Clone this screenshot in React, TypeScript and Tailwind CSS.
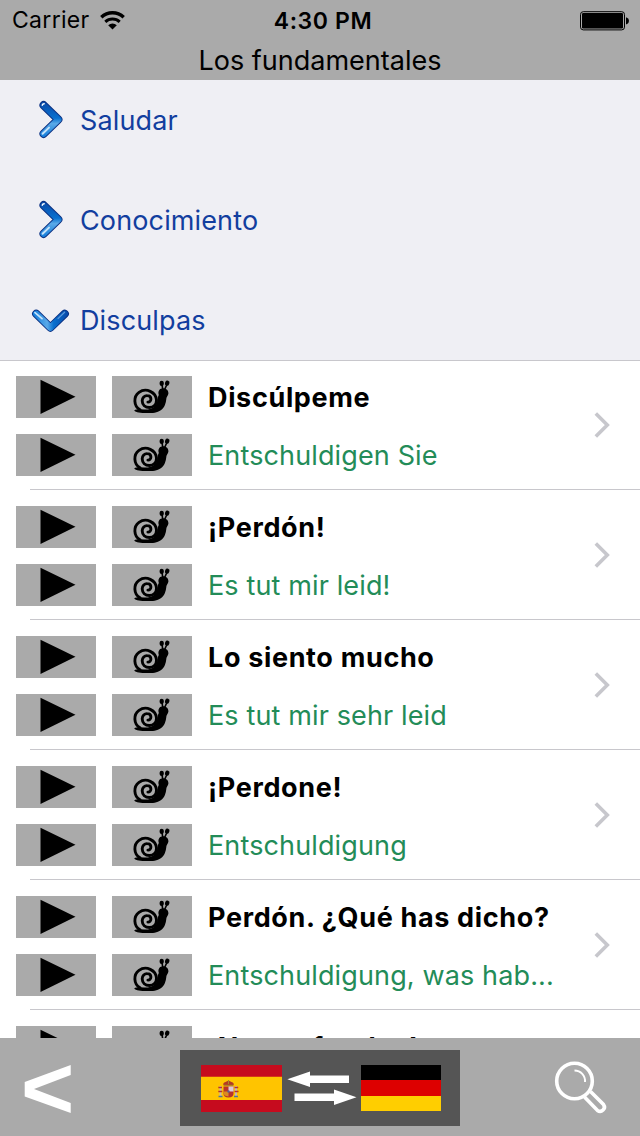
import type { ReactNode } from "react";

const topics = [
  { title: "Saludar", open: false },
  { title: "Conocimiento", open: false },
  { title: "Disculpas", open: true },
];

const phrases = [
  { source: "Discúlpeme", target: "Entschuldigen Sie" },
  { source: "¡Perdón!", target: "Es tut mir leid!" },
  { source: "Lo siento mucho", target: "Es tut mir sehr leid" },
  { source: "¡Perdone!", target: "Entschuldigung" },
  { source: "Perdón. ¿Qué has dicho?", target: "Entschuldigung, was hab..." },
  { source: "¡No me fundas!", target: "" },
];

function WifiIcon() {
  return (
    <svg width="26" height="20" viewBox="0 0 26 20" fill="none" stroke="#000">
      <path d="M1.3 6.2a16.4 16.4 0 0 1 22.4 0" strokeWidth="3.4" />
      <path d="M5.3 10.9a10.6 10.6 0 0 1 14.4 0" strokeWidth="3" />
      <path d="M12.5 18.6 8.2 14.2a6.2 6.2 0 0 1 8.6 0Z" fill="#000" stroke="none" />
    </svg>
  );
}

function BatteryIcon() {
  return (
    <svg width="50" height="20" viewBox="0 0 50 20">
      <rect x="0.5" y="0.7" width="44" height="18.2" rx="2.8" fill="none" stroke="#000" />
      <rect x="2" y="2" width="41" height="15.6" rx="1.3" />
      <path d="M46 6.4h.7q2.3.8 2.3 3.4t-2.3 3.4H46Z" />
    </svg>
  );
}

function GlossyChevron({ open }: { open: boolean }) {
  return (
    <svg width="40" height="40" viewBox="0 0 40 40" fill="none" strokeLinecap="round" strokeLinejoin="round">
      <defs>
        <linearGradient id="gloss-side" gradientUnits="userSpaceOnUse" x1="0" y1="2" x2="0" y2="38">
          <stop offset="0" stopColor="#0a4aa8" />
          <stop offset="0.45" stopColor="#0870cf" />
          <stop offset="0.6" stopColor="#5aa9e8" />
          <stop offset="1" stopColor="#0b78d8" />
        </linearGradient>
        <linearGradient id="gloss-down" gradientUnits="userSpaceOnUse" x1="2" y1="0" x2="38" y2="0">
          <stop offset="0" stopColor="#0b78d8" />
          <stop offset="0.42" stopColor="#5aa9e8" />
          <stop offset="0.6" stopColor="#0870cf" />
          <stop offset="1" stopColor="#0a4aa8" />
        </linearGradient>
      </defs>
      {open ? (
        <>
          <path d="M6.2 13.8 20.4 27.6 34.8 13.8" stroke="#0b2f80" strokeWidth="8.2" />
          <path d="M6.2 13.8 20.4 27.6 34.8 13.8" stroke="url(#gloss-down)" strokeWidth="6.4" />
          <path d="M5 12.6 12 18.6" stroke="#c4e2fa" strokeWidth="1.8" />
          <path d="M28 18.6 34.6 12.2" stroke="#5f9bdc" strokeWidth="1.2" />
        </>
      ) : (
        <>
          <path d="M13.6 5.2 28.3 19.5 13.6 33.8" stroke="#0b2f80" strokeWidth="8.2" />
          <path d="M13.6 5.2 28.3 19.5 13.6 33.8" stroke="url(#gloss-side)" strokeWidth="6.4" />
          <path d="M12.2 5.2q.4-1.4 2-1.4" stroke="#fff" strokeWidth="1.4" />
          <path d="M12.6 33.8 19 27.6" stroke="#c4e2fa" strokeWidth="2" />
        </>
      )}
    </svg>
  );
}

function SnailIcon() {
  return (
    <svg width="40" height="36" viewBox="0 0 40 36" fill="none" stroke="#000" strokeLinecap="round">
      <path
        d="M2.2 31.6C3 30.200 6 30.200 8 30.200L12 30.500C19 31 23.500 28.500 24.800 24c1-3.500.8-6 2-8-1.200-3.800.8-6.700 4.400-6.700 3.200 0 5.400 2.300 5.200 5.200-.2 1.900-1.700 3-2 4.700-.5 5-1.800 9.500-5.600 12-3.500 2.600-8 2.900-14 2.900-6 0-11-.3-12.600-2.500Z"
        fill="#000"
        stroke="none"
      />
      <path
        d="M8 30.800C1.500 27 1.200 17.500 7 13.300c7-5 17.200-.3 17.500 8 .1 4.200-3 7.200-7 7.200-4.300 0-7.300-2.900-7.300-6.700 0-3.200 2.300-5.300 5-5.200 2.200 0 3.700 1.500 3.700 3.500 0 1.800-1.300 3.100-3 3"
        strokeWidth="2.9"
      />
      <path d="M30.700 9.800 29.900 5M33 9.800 35.100 5" strokeWidth="1.6" />
      <path d="M29.700 3.800v1.200M35.400 3.600l-.4 1" strokeWidth="4.200" />
    </svg>
  );
}

function SoundButton({ children, label }: { children: ReactNode; label: string }) {
  return (
    <button type="button" aria-label={label} className="flex h-[42px] w-20 items-center justify-center bg-[#aaaaaa]">
      {children}
    </button>
  );
}

function PlayRow() {
  return (
    <>
      <SoundButton label="Play">
        <svg width="36" height="36" viewBox="0 0 36 36" className="ml-1">
          <path d="M.5.7 35.500 17.800.500 35Z" />
        </svg>
      </SoundButton>
      <SoundButton label="Play slowly">
        <SnailIcon />
      </SoundButton>
    </>
  );
}

function PhraseRow({ source, target }: { source: string; target: string }) {
  return (
    <li className="flex h-[130px] shrink-0 flex-col">
      <div className="flex h-32 items-start pl-4 pt-[15px]">
        <div className="grid grid-cols-[80px_80px] gap-4">
          <PlayRow />
          <PlayRow />
        </div>
        <div className="ml-4 flex w-[370px] flex-col gap-4 whitespace-nowrap text-[27px] leading-[44px]">
          <span className="h-[42px] font-[650] tracking-[0.65px]">{source}</span>
          <span className="h-[42px] tracking-[0.13px] text-[#238c58]">{target}</span>
        </div>
        <svg width="20" height="30" viewBox="0 0 20 30" className="ml-[15px] mt-[34px]" fill="none" stroke="#c7c7cc" strokeWidth="3.6">
          <path d="M2.800 3.500 14.300 15 2.800 26.500" />
        </svg>
      </div>
      <div className="ml-[30px] h-px bg-[#c8c7cc]" />
    </li>
  );
}

function SpainFlag() {
  return (
    <svg width="81" height="47" viewBox="0 0 81 47">
      <path d="M0 0h81v47H0Z" fill="#c60b1e" />
      <path d="M0 11.700h81V35H0Z" fill="#ffc400" />
      <path d="M18.500 21h2v10.500h-2ZM34 21h2v10.500h-2Z" fill="#c8b7b0" />
      <path d="M17.300 22.500h3.700M33.500 22.500h3.700M17.300 26.500h4M33.500 26.500h4" stroke="#b5342b" strokeWidth="1.500" />
      <path d="M17.500 31.500h4M33 31.500h4" stroke="#52739a" strokeWidth="1.600" />
      <path d="M22.500 21.500h10v7q0 4-5 4t-5-4Z" fill="#b8322a" />
      <path d="M27.500 21.500h5v5h-5Z" fill="#dccbd8" />
      <path d="M22.500 26.500h5v5q-5-.5-5-3.500Z" fill="#d98c20" />
      <path d="M22.500 20.500q-1-3 2-3.500l3-1.500 3 1.500q3 .5 2 3.500Z" fill="#b13b26" />
      <path d="M23 20.300h9M27.500 15v4" stroke="#a68a2a" />
      <circle cx="27.500" cy="26.500" r="1.200" fill="#5a5f90" />
    </svg>
  );
}

function SwapArrows() {
  return (
    <svg width="70" height="36" viewBox="0 0 70 36" fill="#fff">
      <path d="M.3 9.200 23 1.500V5.500H62v7.500H23v4Z" />
      <path d="M69.500 27.200 47 19.500v4H7.500v7.500H47v4Z" />
    </svg>
  );
}

function GermanFlag() {
  return (
    <div className="flex h-[46px] w-20 flex-col">
      <div className="h-[15px] bg-black" />
      <div className="h-4 bg-[#dd0000]" />
      <div className="flex-1 bg-[#ffce00]" />
    </div>
  );
}

export default function App() {
  return (
    <div className="flex h-[1136px] w-[640px] flex-col overflow-hidden bg-white font-['Inter',sans-serif] text-black">
      <header className="h-20 shrink-0 bg-[#aaaaaa]">
        <div className="grid h-[41px] grid-cols-3 items-center pl-3 pr-2.5">
          <div className="flex items-center gap-2.5 text-[23px] tracking-[0.3px]">
            <span>Carrier</span>
            <WifiIcon />
          </div>
          <span className="pl-1 pt-px text-center text-[23px] font-semibold tracking-[0.6px]">4:30 PM</span>
          <div className="flex justify-end pt-px">
            <BatteryIcon />
          </div>
        </div>
        <h1 className="text-center text-[27px] leading-10">Los fundamentales</h1>
      </header>

      <nav className="flex h-[281px] shrink-0 flex-col border-b border-[#c8c7cc] bg-[#efeff4]">
        {topics.map((topic) => (
          <button key={topic.title} type="button" className="flex h-[100px] shrink-0 items-start pl-[30px] pt-5 text-[#123e9f]">
            <GlossyChevron open={topic.open} />
            <span className="ml-2.5 text-[27px] leading-[41px] tracking-[0.13px]">{topic.title}</span>
          </button>
        ))}
      </nav>

      <ul className="flex min-h-0 flex-1 flex-col overflow-hidden">
        {phrases.map((phrase) => (
          <PhraseRow key={phrase.source} {...phrase} />
        ))}
      </ul>

      <footer className="grid h-[98px] shrink-0 grid-cols-[180px_280px_1fr] items-center bg-[#aaaaaa]">
        <button type="button" aria-label="Back" className="pl-6 pt-1">
          <svg width="48" height="50" viewBox="0 0 48 50" fill="#fff">
            <path d="M46.700 1v10L10 25l36.700 14v10L.700 32.500V18Z" />
          </svg>
        </button>
        <button type="button" aria-label="Swap languages" className="mt-0.5 flex h-[76px] items-center bg-[#555555] pl-[21px]">
          <SpainFlag />
          <span className="ml-[5px] mr-1">
            <SwapArrows />
          </span>
          <GermanFlag />
        </button>
        <button type="button" aria-label="Search" className="flex justify-end pr-8 pt-0.5">
          <svg width="54" height="54" viewBox="0 0 54 54" fill="none" stroke="#fff" strokeWidth="3.6">
            <circle cx="20.500" cy="20" r="17.800" />
            <path d="M20.500 9.500A10.500 10.500 0 0 1 31 21" strokeWidth="1.900" />
            <path d="M30.500 36 43.500 49.500a4.300 4.300 0 0 0 6-6L36.500 30.500" />
          </svg>
        </button>
      </footer>
    </div>
  );
}
